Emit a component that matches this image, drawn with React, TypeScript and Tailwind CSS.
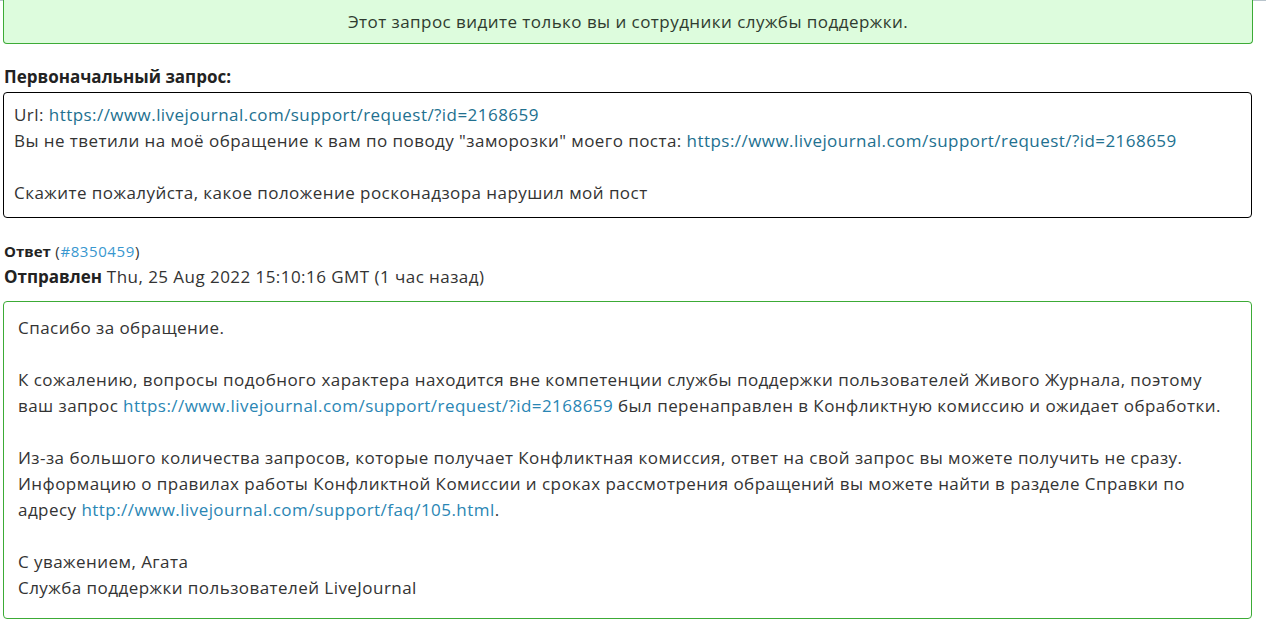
export default function App() {
  const link = "https://www.livejournal.com/support/request/?id=2168659";
  return (
    <div
      className="min-h-screen bg-white text-[#333333] text-[17px] leading-[26px] tracking-[0.45px]"
      style={{ fontFamily: '"Open Sans", "Liberation Sans", sans-serif' }}
    >
      <div className="border-t border-[#b8c4cc]">
        <div className="ml-[3px] mr-[13px] h-[44px] -mt-px flex items-center justify-center rounded-b-[4px] border border-t-0 border-[#3cab36] bg-[#ddfcdd] text-[#2f3b2f]">
          Этот запрос видите только вы и сотрудники службы поддержки.
        </div>
      </div>

      <div className="px-[4px] pt-[20px]">
        <h3 className="font-bold text-[#222] tracking-normal">Первоначальный запрос:</h3>
        <div className="mt-[2px] -ml-px mr-[10px] rounded-[4px] border border-black px-[10px] pt-[9px] pb-[11px]">
          <p>
            Url: <a className="text-[#22708f]">{link}</a>
          </p>
          <p>
            Вы не тветили на моё обращение к вам по поводу "заморозки" моего поста:{" "}
            <a className="text-[#22708f]">{link}</a>
          </p>
          <p>&nbsp;</p>
          <p>Скажите пожалуйста, какое положение росконадзора нарушил мой пост</p>
        </div>

        <div className="mt-[23px] text-[15px] leading-[20px] tracking-[0.6px]">
          <span className="font-bold text-[#222] tracking-normal">Ответ</span> (
          <a className="text-[#3897cf]">#8350459</a>)
        </div>
        <div className="mt-[3px]">
          <span className="font-bold text-[#222] tracking-normal">Отправлен</span> Thu, 25 Aug 2022 15:10:16 GMT (1 час назад)
        </div>

        <div className="mt-[11px] -ml-px mr-[10px] rounded-[4px] border border-[#3cab36] px-[14px] pt-[13px] pb-[17px]">
          <p>Спасибо за обращение.</p>
          <p>&nbsp;</p>
          <p>
            К сожалению, вопросы подобного характера находится вне компетенции службы поддержки пользователей Живого Журнала, поэтому
            ваш запрос <a className="text-[#2a86b4]">{link}</a> был перенаправлен в Конфликтную комиссию и ожидает обработки.
          </p>
          <p>&nbsp;</p>
          <p>
            Из-за большого количества запросов, которые получает Конфликтная комиссия, ответ на свой запрос вы можете получить не сразу.
            Информацию о правилах работы Конфликтной Комиссии и сроках рассмотрения обращений вы можете найти в разделе Справки по
            адресу <a className="text-[#2a86b4]">http://www.livejournal.com/support/faq/105.html</a>.
          </p>
          <p>&nbsp;</p>
          <p>С уважением, Агата</p>
          <p>Служба поддержки пользователей LiveJournal</p>
        </div>
      </div>
    </div>
  );
}
